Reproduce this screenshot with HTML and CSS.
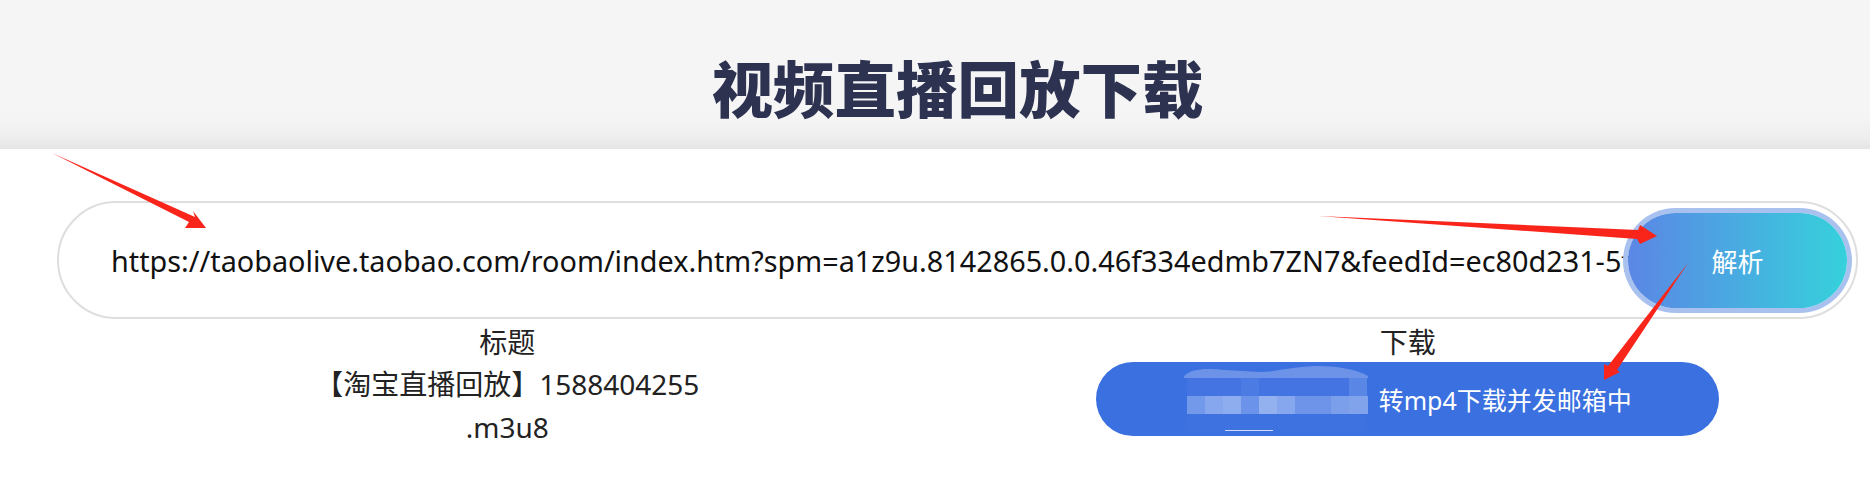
FILE: index.html
```html
<!DOCTYPE html>
<html lang="zh-CN">
<head>
  <meta charset="UTF-8" />
  <meta name="viewport" content="width=device-width, initial-scale=1.0" />
  <title>视频直播回放下载</title>
  <link rel="stylesheet" href="styles.css">
</head>
<body>
  <header class="page-header">
    <h1>视频直播回放下载</h1>
  </header>
  <main>
    <form class="parse-form" onsubmit="return false;">
      <input type="text" class="url-input" aria-label="视频地址" value="https://taobaolive.taobao.com/room/index.htm?spm=a1z9u.8142865.0.0.46f334edmb7ZN7&amp;feedId=ec80d231-5f3a-4c1e-9b7d-2a6e8c4d1f00">
      <button type="button" class="parse-btn">解析</button>
    </form>
    <section class="result">
      <div class="result-col">
        <div class="result-label">标题</div>
        <div class="result-name">【淘宝直播回放】1588404255<br>.m3u8</div>
      </div>
      <div class="result-col">
        <div class="result-label">下载</div>
        <button type="button" class="download-btn">
          <svg class="mosaic" width="184" height="66" viewBox="0 0 184 66" aria-hidden="true">
            <path fill="#6d93e8" d="M0 10 C8 3 20 2 40 4 L76 6 C92 6 104 1 132 0 C152 0 172 3 184 10 L184 12 L0 12 Z"/>
            <rect x="3" y="12" width="178" height="18" fill="#4374e2"/>
            <rect x="57" y="12" width="18" height="18" fill="#4c7be4"/>
            <rect x="165" y="12" width="18" height="18" fill="#5a86e6"/>
            <rect x="3" y="30" width="18" height="18" fill="#739aea"/>
            <rect x="21" y="30" width="18" height="18" fill="#86a6ed"/>
            <rect x="39" y="30" width="18" height="18" fill="#8eadee"/>
            <rect x="57" y="30" width="18" height="18" fill="#6b93e9"/>
            <rect x="75" y="30" width="18" height="18" fill="#94b1ef"/>
            <rect x="93" y="30" width="18" height="18" fill="#86a6ed"/>
            <rect x="111" y="30" width="36" height="18" fill="#6d94e9"/>
            <rect x="147" y="30" width="18" height="18" fill="#7b9feb"/>
            <rect x="165" y="30" width="20" height="18" fill="#81a3ec"/>
            <rect x="3" y="48" width="178" height="17" fill="#3f72e1"/>
            <rect x="41" y="64" width="48" height="1" fill="#cfdcf8"/>
          </svg>
          <span>转mp4下载并发邮箱中</span>
        </button>
      </div>
    </section>
  </main>
  <!-- red annotation arrows drawn over the screenshot -->
  <svg class="arrows" width="1870" height="479" viewBox="0 0 1870 479" aria-hidden="true">
    <path fill="#f9251b" d="M52 153 L195 217 L193 211 L206 228 L185 228 L189 222 Z"/>
    <path fill="#f9251b" d="M1318 216 L1638 230 L1640 225 L1657 236 L1640 244 L1637 239 Z"/>
    <path fill="#f9251b" d="M1688 263 L1617 370 L1620 372 L1604 380 L1604 364 L1608 366 Z"/>
  </svg>
</body>
</html>
```

FILE: styles.css
```css
html, body {
  margin: 0;
  padding: 0;
  background: #fff;
  font-family: 'Noto Sans', 'Noto Sans CJK SC', sans-serif;
  color: #222;
}
body {
  position: relative;
  height: 479px;
  overflow: hidden;
}
.page-header {
  height: 149px;
  box-sizing: border-box;
  padding: 0 12px 0 57px;
  background: linear-gradient(to bottom, #f5f5f6 0%, #f5f5f6 78%, #eeeeef 92%, #e5e5e6 100%);
  display: flex;
  justify-content: center;
  align-items: flex-start;
}
.page-header h1 {
  margin: 45px 0 0 0;
  font-family: 'Noto Sans CJK SC', sans-serif;
  font-size: 61.5px;
  line-height: 84px;
  font-weight: 900;
  color: #2d3250;
}
main {
  padding: 52px 12px 0 57px;
}
.parse-form {
  position: relative;
  height: 118px;
  box-sizing: border-box;
  border: 2px solid #dedede;
  border-radius: 59px;
  overflow: hidden;
}
.url-input {
  display: block;
  width: 100%;
  height: 100%;
  box-sizing: border-box;
  padding: 0 225px 0 52px;
  border: none;
  outline: none;
  background: transparent;
  font-family: 'Noto Sans', 'Noto Sans CJK SC', sans-serif;
  font-size: 28.8px;
  color: #111;
}
.parse-btn {
  position: absolute;
  top: 10px;
  right: 9px;
  width: 219px;
  height: 95px;
  border: none;
  border-radius: 48px;
  background: linear-gradient(to right, #5b86e5, #36d1dc);
  box-shadow: 0 0 0 5px #a9c1ee;
  color: #fff;
  font-family: 'Noto Sans CJK SC', sans-serif;
  font-size: 26px;
}
.result {
  display: grid;
  grid-template-columns: 1fr 1fr;
}
.result-col {
  display: flex;
  flex-direction: column;
  align-items: center;
  text-align: center;
}
.result-label, .result-name {
  font-size: 28px;
  line-height: 43px;
  color: #222;
  font-family: 'Noto Sans', 'Noto Sans CJK SC', sans-serif;
}
.result-label {
  padding-top: 3px;
  line-height: 41px;
}
.download-btn {
  width: 623px;
  height: 74px;
  margin-top: -1px;
  padding: 0;
  border: none;
  border-radius: 37px;
  background: #3a70e0;
  color: #fff;
  font-family: 'Noto Sans', 'Noto Sans CJK SC', sans-serif;
  font-size: 25px;
  display: flex;
  align-items: center;
  justify-content: center;
  gap: 11px;
}
.mosaic {
  flex: none;
}
.arrows {
  position: absolute;
  top: 0;
  left: 0;
  pointer-events: none;
}
```
